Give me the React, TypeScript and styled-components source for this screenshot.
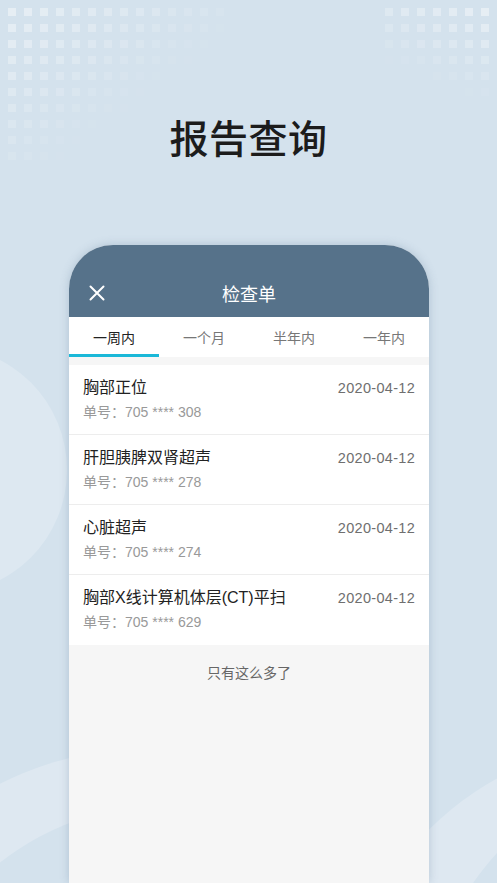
import React from "react";
import styled, { createGlobalStyle } from "styled-components";

const GlobalStyle = createGlobalStyle`
  html, body {
    margin: 0;
    padding: 0;
    background: #d4e2ed;
  }
  body {
    font-family: "Liberation Sans", "Noto Sans CJK SC", sans-serif;
  }
`;

type Report = { name: string; no: string; date: string };

const reports: Report[] = [
  { name: "胸部正位", no: "705 **** 308", date: "2020-04-12" },
  { name: "肝胆胰脾双肾超声", no: "705 **** 278", date: "2020-04-12" },
  { name: "心脏超声", no: "705 **** 274", date: "2020-04-12" },
  { name: "胸部X线计算机体层(CT)平扫", no: "705 **** 629", date: "2020-04-12" },
];

const tabs = ["一周内", "一个月", "半年内", "一年内"];

const Backdrop = () => {
  const left: React.ReactNode[] = [];
  for (let r = 0; r < 10; r++) {
    for (let c = 0; c < 14; c++) {
      const o = 1 - (c + 1.35 * r) / 16;
      if (o <= 0) continue;
      left.push(
        <rect key={`l${r}-${c}`} x={8 + c * 16} y={8 + r * 16} width={8} height={8} fill="#ffffff" opacity={0.42 * o} />
      );
    }
  }
  const right: React.ReactNode[] = [];
  for (let r = 0; r < 6; r++) {
    for (let c = 0; c < 7; c++) {
      const o = 1 - ((6 - c) * 0.07 + r * 0.17);
      if (o <= 0) continue;
      right.push(
        <rect key={`r${r}-${c}`} x={385 + c * 16} y={8 + r * 16} width={8} height={8} fill="#ffffff" opacity={0.42 * o} />
      );
    }
  }
  return (
    <BackdropSvg viewBox="0 0 497 883" width="497" height="883">
      <circle cx={-57} cy={470} r={124} fill="#dde8f1" />
      <circle cx={150} cy={1080} r={332} fill="#dee8f1" />
      <circle cx={170} cy={1080} r={276} fill="#d4e2ed" />
      <circle cx={640} cy={1040} r={298} fill="#dee8f1" />
      <circle cx={700} cy={1040} r={276} fill="#d4e2ed" />
      {left}
      {right}
    </BackdropSvg>
  );
};

const CloseIcon = () => (
  <svg width="16" height="16" viewBox="0 0 16 16" fill="none">
    <path d="M1.5 1.5 L14.5 14.5 M14.5 1.5 L1.5 14.5" stroke="#ffffff" strokeWidth="2" strokeLinecap="round" />
  </svg>
);

export default function App() {
  return (
    <>
      <GlobalStyle />
      <Page>
        <Backdrop />
        <PageTitle>报告查询</PageTitle>
        <Card>
          <Header>
            <CloseButton>
              <CloseIcon />
            </CloseButton>
            <HeaderTitle>检查单</HeaderTitle>
            <span />
          </Header>
          <TabBar>
            {tabs.map((t, i) => (
              <Tab key={t} $active={i === 0}>
                {t}
              </Tab>
            ))}
          </TabBar>
          <List>
            {reports.map((r) => (
              <Item key={r.no}>
                <ItemTop>
                  <ItemName>{r.name}</ItemName>
                  <ItemDate>{r.date}</ItemDate>
                </ItemTop>
                <ItemNo>单号：{r.no}</ItemNo>
              </Item>
            ))}
          </List>
          <Footer>只有这么多了</Footer>
        </Card>
      </Page>
    </>
  );
}

const Page = styled.div`
  position: relative;
  width: 497px;
  height: 883px;
  overflow: hidden;
  background: #d4e2ed;
  display: flex;
  flex-direction: column;
  align-items: center;
`;

const BackdropSvg = styled.svg`
  position: absolute;
  left: 0;
  top: 0;
  z-index: 0;
`;

const PageTitle = styled.h1`
  position: relative;
  z-index: 1;
  margin: 108px 0 0;
  height: 56px;
  line-height: 56px;
  font-family: "Noto Sans CJK SC Medium", "Noto Sans CJK SC", sans-serif;
  font-size: 39px;
  font-weight: 500;
  color: #1c1c1c;
  letter-spacing: 0.5px;
`;

const Card = styled.div`
  position: relative;
  z-index: 1;
  margin-top: 81px;
  width: 360px;
  flex: 1;
  margin-left: 1px;
  background: #f6f6f6;
  border-radius: 44px 44px 0 0;
  overflow: hidden;
  box-shadow: 0 0 10px rgba(90, 120, 150, 0.3);
`;

const Header = styled.div`
  height: 48px;
  padding-top: 24px;
  background: #56728a;
  display: grid;
  grid-template-columns: 56px 1fr 56px;
  align-items: center;
`;

const CloseButton = styled.div`
  display: flex;
  align-items: center;
  justify-content: center;
  height: 100%;
`;

const HeaderTitle = styled.div`
  text-align: center;
  color: #ffffff;
  font-size: 18px;
  font-family: "Noto Sans CJK SC", sans-serif;
`;

const TabBar = styled.div`
  height: 40px;
  background: #ffffff;
  display: grid;
  grid-template-columns: repeat(4, 1fr);
  margin-bottom: 8px;
`;

const Tab = styled.div<{ $active?: boolean }>`
  position: relative;
  display: flex;
  align-items: center;
  justify-content: center;
  padding-bottom: 1px;
  font-family: "Noto Sans CJK SC", sans-serif;
  font-size: 14px;
  color: ${(p) => (p.$active ? "#222222" : "#777777")};
  &::after {
    content: "";
    position: absolute;
    left: 0;
    right: 0;
    bottom: 0;
    height: 3px;
    background: ${(p) => (p.$active ? "#1ab8d8" : "transparent")};
  }
`;

const List = styled.div`
  background: #ffffff;
`;

const Item = styled.div`
  height: 70px;
  box-sizing: border-box;
  padding: 12px 14px 0 14px;
  border-bottom: 1px solid #ededed;
  &:last-child {
    border-bottom: none;
  }
`;

const ItemTop = styled.div`
  display: flex;
  justify-content: space-between;
  align-items: center;
  height: 22px;
`;

const ItemName = styled.div`
  font-size: 16px;
  color: #222222;
  line-height: 22px;
`;

const ItemDate = styled.div`
  font-size: 14.5px;
  color: #6f6f6f;
  letter-spacing: 0.3px;
`;

const ItemNo = styled.div`
  margin-top: 3px;
  font-size: 14px;
  line-height: 20px;
  color: #999999;
`;

const Footer = styled.div`
  padding-top: 18px;
  text-align: center;
  font-size: 14px;
  line-height: 20px;
  color: #666666;
`;
